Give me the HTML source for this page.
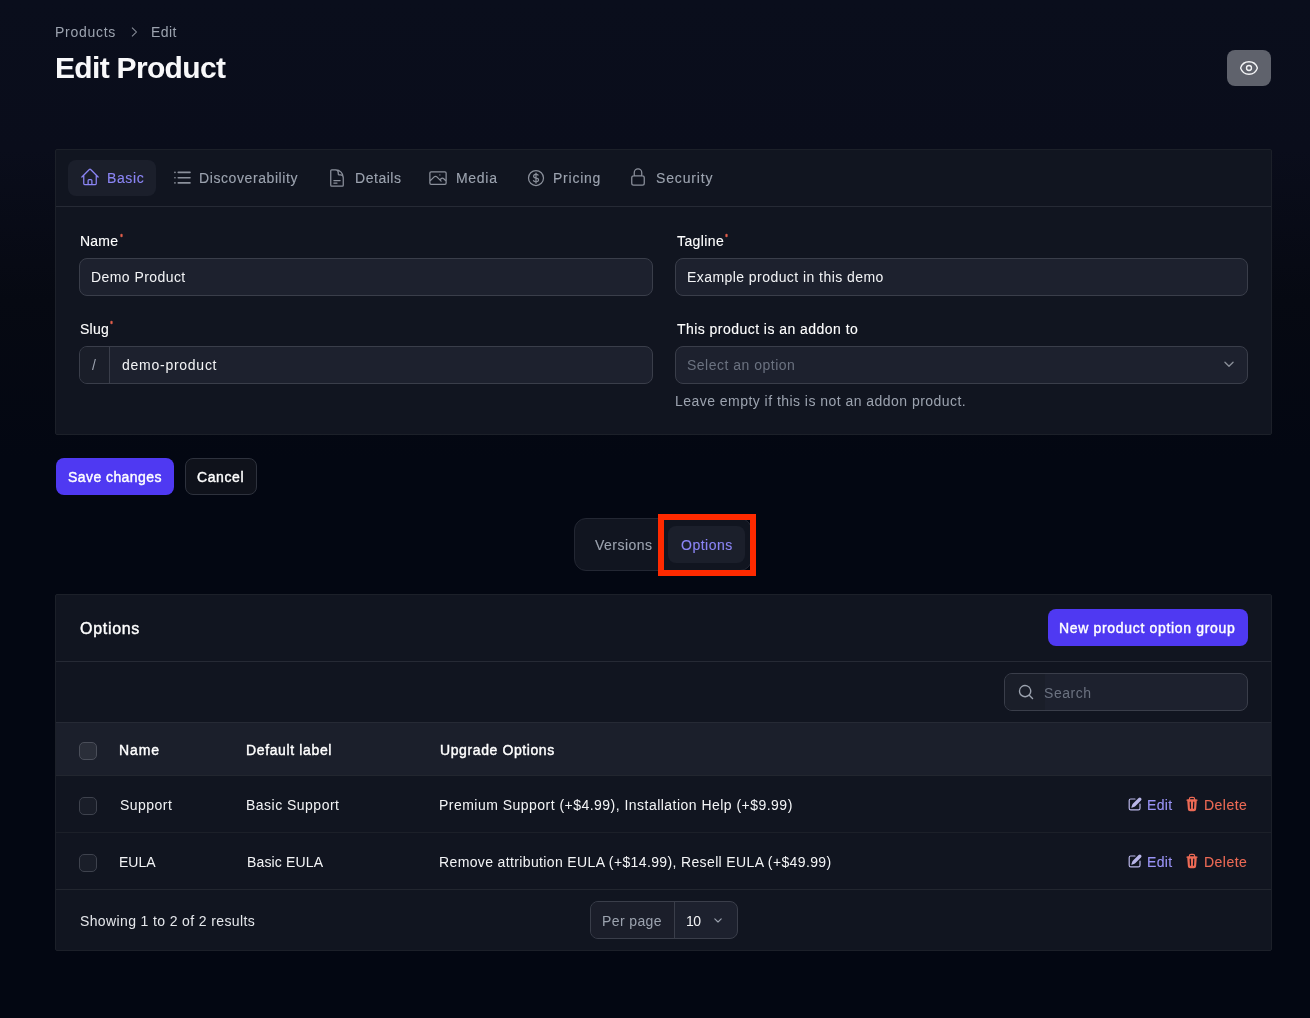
<!DOCTYPE html>
<html><head><meta charset="utf-8">
<style>
*{box-sizing:border-box;margin:0;padding:0}
html,body{width:1310px;height:1018px;overflow:hidden}
body{font-family:"Liberation Sans",sans-serif;font-size:14px;line-height:20px;color:#fff;
background:linear-gradient(180deg,#0a0e1c 0px,#0a0d1b 150px,#060912 300px,#030712 460px,#030712 1018px);position:relative}
.a{position:absolute;white-space:nowrap;will-change:transform}
.card{position:absolute;background:#111520;border:1px solid #1c2029;border-radius:2px;overflow:hidden}
.inp{position:absolute;background:#1d212e;border:1px solid #3a3e4a;border-radius:8px;overflow:hidden}
.med{-webkit-text-stroke:0.12px currentColor}
.g4{color:#9ca3af}
.b{font-weight:bold}
.sb{-webkit-text-stroke:0.4px currentColor}
.ast{position:absolute;left:100%;top:-3px;margin-left:1px;color:#e8604c;font-size:10px;line-height:10px;-webkit-text-stroke:0;letter-spacing:0}
svg{display:block}
</style></head>
<body>
<div id="products" class="a g4" style="left:55.20px;top:22.00px;letter-spacing:0.729px;">Products</div>
<svg class="a" style="left:126px;top:23.6px" width="16" height="16" viewBox="0 0 20 20" ><path d="M7.5 4.5 13 10l-5.5 5.5" fill="none" stroke="#8b909b" stroke-width="1.3"/></svg>
<div id="editbc" class="a g4" style="left:151.20px;top:22.00px;letter-spacing:0.430px;">Edit</div>
<div id="heading" class="a b" style="left:54.72px;top:50.00px;letter-spacing:-0.677px;font-size:30px;line-height:36px;color:#f8f8fa">Edit Product</div>
<div class="a" style="left:1227px;top:50px;width:44px;height:36px;border-radius:8px;background:#5f626c"></div>
<svg class="a" style="left:1239px;top:58px" width="20" height="20" viewBox="0 0 24 24" fill="none" stroke="#f3f4f6" stroke-width="1.6"><path d="M2.036 12.322a1.012 1.012 0 0 1 0-.639C3.423 7.51 7.36 4.5 12 4.5c4.638 0 8.573 3.007 9.963 7.178.07.207.07.431 0 .639C20.577 16.49 16.64 19.5 12 19.5c-4.638 0-8.573-3.007-9.963-7.178Z"/><path d="M15 12a3 3 0 1 1-6 0 3 3 0 0 1 6 0Z"/></svg>
<div class="card" style="left:55px;top:149px;width:1217px;height:286px"><div style="position:absolute;left:0;top:56px;width:100%;height:1px;background:#262a35"></div></div>
<div class="a" style="left:68px;top:160px;width:88px;height:36px;border-radius:8px;background:#1b1f2b"></div>
<svg class="a" style="left:80px;top:167px" width="20" height="20" viewBox="0 0 24 24" fill="none" stroke="#8b85f5" stroke-width="1.5" stroke-linecap="round" stroke-linejoin="round"><path d="m2.25 12 8.954-8.955c.44-.439 1.152-.439 1.591 0L21.75 12M4.5 9.75v10.125c0 .621.504 1.125 1.125 1.125H9.75v-4.875c0-.621.504-1.125 1.125-1.125h2.25c.621 0 1.125.504 1.125 1.125V21h4.125c.621 0 1.125-.504 1.125-1.125V9.75M8.25 21h8.25"/></svg>
<div id="basic" class="a med" style="left:106.68px;top:168.00px;letter-spacing:0.600px;color:#8b85f5">Basic</div>
<svg class="a" style="left:170px;top:165px" width="24" height="24" viewBox="0 0 24 24" fill="none" stroke="#8b909b" stroke-width="1.6" stroke-linecap="round" stroke-linejoin="round"><path d="M8.25 7.4h11.75M8.25 12.7h11.75M8.25 17.9h11.75M4.9 7.4h.1M4.9 12.7h.1M4.9 17.9h.1"/></svg>
<div id="discover" class="a med g4" style="left:199.20px;top:168.00px;letter-spacing:0.586px;">Discoverability</div>
<svg class="a" style="left:327px;top:168px" width="20" height="20" viewBox="0 0 24 24" fill="none" stroke="#8b909b" stroke-width="1.5" stroke-linecap="round" stroke-linejoin="round"><path d="M19.5 14.25v-2.625a3.375 3.375 0 0 0-3.375-3.375h-1.5A1.125 1.125 0 0 1 13.5 7.125v-1.5a3.375 3.375 0 0 0-3.375-3.375H8.25m0 12.75h7.5m-7.5 3H12M10.5 2.25H5.625c-.621 0-1.125.504-1.125 1.125v17.25c0 .621.504 1.125 1.125 1.125h12.75c.621 0 1.125-.504 1.125-1.125V11.25a9 9 0 0 0-9-9Z"/></svg>
<div id="details" class="a med g4" style="left:354.84px;top:168.00px;letter-spacing:0.536px;">Details</div>
<svg class="a" style="left:428px;top:168px" width="20" height="20" viewBox="0 0 24 24" fill="none" stroke="#8b909b" stroke-width="1.5" stroke-linecap="round" stroke-linejoin="round"><path d="m2.25 15.75 5.159-5.159a2.25 2.25 0 0 1 3.182 0l5.159 5.159m-1.5-1.5 1.409-1.409a2.25 2.25 0 0 1 3.182 0l2.909 2.909m-18 3.75h16.5a1.5 1.5 0 0 0 1.5-1.5V6a1.5 1.5 0 0 0-1.5-1.5H3.75A1.5 1.5 0 0 0 2.25 6v12a1.5 1.5 0 0 0 1.5 1.5Zm10.5-11.25h.008v.008h-.008V8.25Z"/></svg>
<div id="media" class="a med g4" style="left:455.52px;top:168.00px;letter-spacing:0.700px;">Media</div>
<svg class="a" style="left:526px;top:168px" width="20" height="20" viewBox="0 0 24 24" fill="none" stroke="#8b909b" stroke-width="1.5" stroke-linecap="round" stroke-linejoin="round"><path d="M12 6v12m-3-2.818.879.659c1.171.879 3.07.879 4.242 0 1.172-.879 1.172-2.303 0-3.182C13.536 12.219 12.768 12 12 12c-.725 0-1.45-.22-2.003-.659-1.106-.879-1.106-2.303 0-3.182s2.9-.879 4.006 0l.415.33M21 12a9 9 0 1 1-18 0 9 9 0 0 1 18 0Z"/></svg>
<div id="pricing" class="a med g4" style="left:553.20px;top:168.00px;letter-spacing:0.765px;">Pricing</div>
<svg class="a" style="left:628px;top:167px" width="20" height="20" viewBox="0 0 24 24" fill="none" stroke="#8b909b" stroke-width="1.5" stroke-linecap="round" stroke-linejoin="round"><path d="M16.5 10.5V6.75a4.5 4.5 0 1 0-9 0v3.75m-.75 11.25h10.5a2.25 2.25 0 0 0 2.25-2.25v-6.75a2.25 2.25 0 0 0-2.25-2.25H6.75a2.25 2.25 0 0 0-2.25 2.25v6.75a2.25 2.25 0 0 0 2.25 2.25Z"/></svg>
<div id="security" class="a med g4" style="left:655.68px;top:168.00px;letter-spacing:0.845px;">Security</div>
<div id="namelbl" class="a med" style="left:80.00px;top:231.00px;letter-spacing:0.200px;">Name</div>
<svg class="a" style="left:118.90px;top:232.70px" width="5" height="5" viewBox="0 0 6 6"><path d="M3 1V5M1.27 2 4.73 4M1.27 4 4.73 2" stroke="#e8604c" stroke-width="1.1"/></svg>
<div class="inp" style="left:79px;top:258px;width:574px;height:38px"></div>
<div id="demoproduct" class="a " style="left:90.88px;top:267.00px;letter-spacing:0.429px;color:#f3f4f6">Demo Product</div>
<div id="taglbl" class="a med" style="left:676.80px;top:231.00px;letter-spacing:0.399px;">Tagline</div>
<svg class="a" style="left:724.40px;top:233.40px" width="5" height="5" viewBox="0 0 6 6"><path d="M3 1V5M1.27 2 4.73 4M1.27 4 4.73 2" stroke="#e8604c" stroke-width="1.1"/></svg>
<div class="inp" style="left:675px;top:258px;width:573px;height:38px"></div>
<div id="example" class="a " style="left:686.56px;top:267.00px;letter-spacing:0.439px;color:#f3f4f6">Example product in this demo</div>
<div id="sluglbl" class="a med" style="left:80.00px;top:319.00px;letter-spacing:0.267px;">Slug</div>
<svg class="a" style="left:109.10px;top:320.40px" width="5" height="5" viewBox="0 0 6 6"><path d="M3 1V5M1.27 2 4.73 4M1.27 4 4.73 2" stroke="#e8604c" stroke-width="1.1"/></svg>
<div class="inp" style="left:79px;top:346px;width:574px;height:38px"><div style="position:absolute;left:0;top:0;width:30px;height:36px;background:#1a1e29;border-right:1px solid #3a3e4a"></div></div>
<div class="a g4" style="left:92px;top:355px">/</div>
<div id="demoslug" class="a " style="left:121.52px;top:355.00px;letter-spacing:0.739px;color:#f3f4f6">demo-product</div>
<div id="addonlbl" class="a med" style="left:676.80px;top:319.00px;letter-spacing:0.457px;">This product is an addon to</div>
<div class="inp" style="left:675px;top:346px;width:573px;height:38px"></div>
<div id="select" class="a " style="left:686.56px;top:355.00px;letter-spacing:0.500px;color:#6b7280">Select an option</div>
<svg class="a" style="left:1220px;top:355px" width="18" height="18" viewBox="0 0 20 20" ><path d="M5.5 8 10 12.5 14.5 8" fill="none" stroke="#8a8f99" stroke-width="1.5" stroke-linecap="round" stroke-linejoin="round"/></svg>
<div id="leave" class="a " style="left:675.20px;top:391.00px;letter-spacing:0.463px;color:#9ca3af">Leave empty if this is not an addon product.</div>
<div class="a" style="left:56px;top:458px;width:118px;height:37px;border-radius:8px;background:#4f39f2"></div>
<div id="save" class="a sb" style="left:67.84px;top:467.00px;letter-spacing:0.434px;">Save changes</div>
<div class="a" style="left:185px;top:458px;width:72px;height:37px;border-radius:8px;background:#0f121b;border:1px solid #2e323d"></div>
<div id="cancel" class="a sb" style="left:197.36px;top:467.00px;letter-spacing:0.600px;">Cancel</div>
<div class="a" style="left:574px;top:518px;width:178px;height:53px;border-radius:12px;background:#111520;border:1px solid #232733"></div>
<div class="a" style="left:668px;top:526px;width:77px;height:37px;border-radius:8px;background:#1b1f2b"></div>
<div id="versions" class="a med g4" style="left:594.84px;top:535.00px;letter-spacing:0.476px;">Versions</div>
<div id="optionstab" class="a med" style="left:681.00px;top:535.00px;letter-spacing:0.497px;color:#8b85f5">Options</div>
<div class="a" style="left:658px;top:514px;width:98px;height:62px;border:6px solid #ff2a00"></div>
<div class="card" style="left:55px;top:594px;width:1217px;height:357px">
<div style="position:absolute;left:0;top:66px;width:100%;height:1px;background:#262a35"></div>
<div style="position:absolute;left:0;top:127px;width:100%;height:54px;background:#1b1f2b;border-top:1px solid #262a35;border-bottom:1px solid #22262f"></div>
<div style="position:absolute;left:0;top:237px;width:100%;height:1px;background:#1c2029"></div>
<div style="position:absolute;left:0;top:294px;width:100%;height:1px;background:#22262f"></div>
</div>
<div id="optionsh" class="a sb" style="left:80.32px;top:617.00px;letter-spacing:0.698px;font-size:16px;line-height:24px">Options</div>
<div class="a" style="left:1048px;top:609px;width:200px;height:37px;border-radius:8px;background:#4f39f2"></div>
<div id="newbtn" class="a sb" style="left:1059.04px;top:618.00px;letter-spacing:0.669px;">New product option group</div>
<div class="inp" style="left:1004px;top:673px;width:244px;height:38px"><div style="position:absolute;left:0;top:0;width:40px;height:36px;background:#1a1e29"></div></div>
<svg class="a" style="left:1017px;top:683px" width="18" height="18" viewBox="0 0 20 20" ><path fill="#9ca3af" fill-rule="evenodd" d="M9 3.5a5.5 5.5 0 1 0 0 11 5.5 5.5 0 0 0 0-11ZM2 9a7 7 0 1 1 12.452 4.391l3.328 3.329a.75.75 0 1 1-1.06 1.06l-3.329-3.328A7 7 0 0 1 2 9Z"/></svg>
<div id="search" class="a " style="left:1044.20px;top:683.00px;letter-spacing:0.540px;color:#6b7280">Search</div>
<div class="a" style="left:79px;top:742px;width:18px;height:18px;border-radius:5px;background:#2a2e39;border:1px solid #4a4e59"></div>
<div id="nameh" class="a sb" style="left:119.20px;top:740.00px;letter-spacing:0.933px;">Name</div>
<div id="defaulth" class="a sb" style="left:246.04px;top:740.00px;letter-spacing:0.634px;">Default label</div>
<div id="upgradeh" class="a sb" style="left:440.16px;top:740.00px;letter-spacing:0.600px;">Upgrade Options</div>
<div class="a" style="left:79px;top:797px;width:18px;height:18px;border-radius:5px;background:#1a1e29;border:1px solid #3e424d"></div>
<div id="support" class="a " style="left:120.00px;top:795.00px;letter-spacing:0.467px;color:#f3f4f6">Support</div>
<div id="basicsupport" class="a " style="left:246.04px;top:795.00px;letter-spacing:0.482px;color:#f3f4f6">Basic Support</div>
<div id="premium" class="a " style="left:439.36px;top:795.00px;letter-spacing:0.473px;color:#f3f4f6">Premium Support (+$4.99), Installation Help (+$9.99)</div>
<svg class="a" style="left:1127px;top:796px" width="16" height="16" viewBox="0 0 20 20" fill="#b9b6e8"><path d="M5.433 13.917l1.262-3.155A4 4 0 0 1 7.58 9.42l6.92-6.918a2.121 2.121 0 0 1 3 3l-6.92 6.918c-.383.383-.84.685-1.343.886l-3.154 1.262a.5.5 0 0 1-.65-.65Z"/><path d="M3.5 5.75c0-.69.56-1.25 1.25-1.25H10A.75.75 0 0 0 10 3H4.75A2.75 2.75 0 0 0 2 5.75v9.5A2.75 2.75 0 0 0 4.75 18h9.5A2.75 2.75 0 0 0 17 15.25V10a.75.75 0 0 0-1.5 0v5.25c0 .69-.56 1.25-1.25 1.25h-9.5c-.69 0-1.25-.56-1.25-1.25v-9.5Z"/></svg>
<div id="edit0" class="a med" style="left:1146.88px;top:795.00px;letter-spacing:0.365px;color:#9a94f7">Edit</div>
<svg class="a" style="left:1184px;top:796px" width="16" height="16" viewBox="0 0 20 20" fill="#ec6a55"><path fill-rule="evenodd" d="M8.75 1A2.75 2.75 0 0 0 6 3.75v.443c-.795.077-1.584.176-2.365.298a.75.75 0 1 0 .23 1.482l.149-.022.841 10.518A2.75 2.75 0 0 0 7.596 19h4.807a2.75 2.75 0 0 0 2.742-2.53l.841-10.52.149.023a.75.75 0 0 0 .23-1.482A41.03 41.03 0 0 0 14 4.193V3.75A2.75 2.75 0 0 0 11.25 1h-2.5ZM10 4c.84 0 1.673.025 2.5.075V3.75c0-.69-.56-1.25-1.25-1.25h-2.5c-.69 0-1.25.56-1.25 1.25v.325C8.327 4.025 9.16 4 10 4ZM8.58 7.72a.75.75 0 0 0-1.5.06l.3 7.5a.75.75 0 1 0 1.5-.06l-.3-7.5Zm4.34.06a.75.75 0 1 0-1.5-.06l-.3 7.5a.75.75 0 1 0 1.5.06l.3-7.5Z"/></svg>
<div id="delete0" class="a med" style="left:1203.72px;top:795.00px;letter-spacing:0.460px;color:#ec6a55">Delete</div>
<div class="a" style="left:79px;top:854px;width:18px;height:18px;border-radius:5px;background:#1a1e29;border:1px solid #3e424d"></div>
<div id="eula" class="a " style="left:118.88px;top:852.00px;letter-spacing:0.032px;color:#f3f4f6">EULA</div>
<div id="basiceula" class="a " style="left:246.52px;top:852.00px;letter-spacing:0.143px;color:#f3f4f6">Basic EULA</div>
<div id="remove" class="a " style="left:439.36px;top:852.00px;letter-spacing:0.366px;color:#f3f4f6">Remove attribution EULA (+$14.99), Resell EULA (+$49.99)</div>
<svg class="a" style="left:1127px;top:853px" width="16" height="16" viewBox="0 0 20 20" fill="#b9b6e8"><path d="M5.433 13.917l1.262-3.155A4 4 0 0 1 7.58 9.42l6.92-6.918a2.121 2.121 0 0 1 3 3l-6.92 6.918c-.383.383-.84.685-1.343.886l-3.154 1.262a.5.5 0 0 1-.65-.65Z"/><path d="M3.5 5.75c0-.69.56-1.25 1.25-1.25H10A.75.75 0 0 0 10 3H4.75A2.75 2.75 0 0 0 2 5.75v9.5A2.75 2.75 0 0 0 4.75 18h9.5A2.75 2.75 0 0 0 17 15.25V10a.75.75 0 0 0-1.5 0v5.25c0 .69-.56 1.25-1.25 1.25h-9.5c-.69 0-1.25-.56-1.25-1.25v-9.5Z"/></svg>
<div id="edit1" class="a med" style="left:1146.88px;top:852.00px;letter-spacing:0.365px;color:#9a94f7">Edit</div>
<svg class="a" style="left:1184px;top:853px" width="16" height="16" viewBox="0 0 20 20" fill="#ec6a55"><path fill-rule="evenodd" d="M8.75 1A2.75 2.75 0 0 0 6 3.75v.443c-.795.077-1.584.176-2.365.298a.75.75 0 1 0 .23 1.482l.149-.022.841 10.518A2.75 2.75 0 0 0 7.596 19h4.807a2.75 2.75 0 0 0 2.742-2.53l.841-10.52.149.023a.75.75 0 0 0 .23-1.482A41.03 41.03 0 0 0 14 4.193V3.75A2.75 2.75 0 0 0 11.25 1h-2.5ZM10 4c.84 0 1.673.025 2.5.075V3.75c0-.69-.56-1.25-1.25-1.25h-2.5c-.69 0-1.25.56-1.25 1.25v.325C8.327 4.025 9.16 4 10 4ZM8.58 7.72a.75.75 0 0 0-1.5.06l.3 7.5a.75.75 0 1 0 1.5-.06l-.3-7.5Zm4.34.06a.75.75 0 1 0-1.5-.06l-.3 7.5a.75.75 0 1 0 1.5.06l.3-7.5Z"/></svg>
<div id="delete1" class="a med" style="left:1203.72px;top:852.00px;letter-spacing:0.460px;color:#ec6a55">Delete</div>
<div id="showing" class="a " style="left:80.16px;top:911.00px;letter-spacing:0.373px;color:#e5e7eb">Showing 1 to 2 of 2 results</div>
<div class="inp" style="left:590px;top:901px;width:148px;height:38px"><div style="position:absolute;left:0;top:0;width:84px;height:36px;background:#1b1e2a;border-right:1px solid #3a3e4a"></div></div>
<div id="perpage" class="a " style="left:602.36px;top:911.00px;letter-spacing:0.389px;color:#9ca3af">Per page</div>
<div id="ten" class="a " style="left:686.36px;top:911.00px;letter-spacing:-0.600px;color:#f3f4f6">10</div>
<svg class="a" style="left:710px;top:912px" width="16" height="16" viewBox="0 0 20 20" ><path d="M6 8.5 10 12.5 14 8.5" fill="none" stroke="#9ca3af" stroke-width="1.4" stroke-linecap="round" stroke-linejoin="round"/></svg>
</body></html>
